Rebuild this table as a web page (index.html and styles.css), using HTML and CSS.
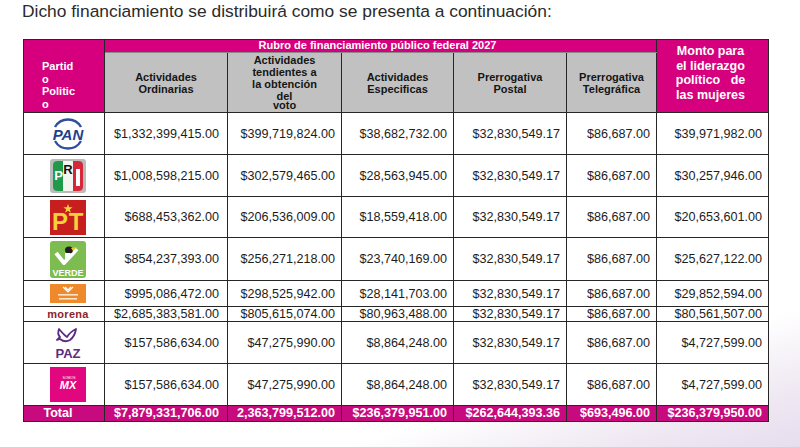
FILE: index.html
```html
<!DOCTYPE html>
<html lang="es">
<head>
<meta charset="utf-8">
<title>Financiamiento</title>
<link rel="stylesheet" href="styles.css">
</head>
<body>
<p class="title">Dicho financiamiento se distribuirá como se presenta a continuación:</p>
<table class="fin">
  <colgroup>
    <col class="c-party"><col class="c1"><col class="c2"><col class="c3"><col class="c4"><col class="c5"><col class="c6">
  </colgroup>
  <thead>
    <tr class="h-top">
      <th class="mag party-h" rowspan="2">Partid<br>o<br>Politic<br>o</th>
      <th class="mag rubro" colspan="5"><div class="rubro-in">Rubro de financiamiento público federal 2027</div></th>
      <th class="mag monto" rowspan="2">Monto para<br>el liderazgo<br>político&nbsp;&nbsp; de<br>las mujeres</th>
    </tr>
    <tr class="h-sub">
      <th class="gray">Actividades<br>Ordinarias</th>
      <th class="gray">Actividades<br>tendientes a<br>la obtención<br><span class="tight">del<br>voto</span></th>
      <th class="gray">Actividades<br>Especificas</th>
      <th class="gray">Prerrogativa<br>Postal</th>
      <th class="gray">Prerrogativa<br>Telegráfica</th>
    </tr>
  </thead>
  <tbody>
    <tr class="r42">
      <td class="logo">
        <svg width="40" height="38" viewBox="0 0 40 38">
          <path d="M7 12 A15 15 0 0 1 33 12" fill="none" stroke="#2d4f9e" stroke-width="2.4"/>
          <path d="M7 26 A15 15 0 0 0 33 26" fill="none" stroke="#2d4f9e" stroke-width="2.4"/>
          <text x="20" y="24.5" text-anchor="middle" class="pan-t">PAN</text>
        </svg>
      </td>
      <td>$1,332,399,415.00</td><td>$399,719,824.00</td><td>$38,682,732.00</td><td>$32,830,549.17</td><td>$86,687.00</td><td>$39,971,982.00</td>
    </tr>
    <tr class="r42">
      <td class="logo">
        <svg width="36" height="34" viewBox="0 0 36 34">
          <rect x="0" y="0" width="36" height="34" rx="3" fill="#b9bcb8"/>
          <path d="M3 6 Q3 2 8 2 L13 2 L13 32 L8 32 Q3 32 3 28 Z" fill="#1f9a4a"/>
          <rect x="13" y="2" width="10" height="30" fill="#f4f4f0"/>
          <path d="M23 2 L28 2 Q33 2 33 6 L33 28 Q33 32 28 32 L23 32 Z" fill="#d7263a"/>
          <text x="8.5" y="21" class="pri-t" fill="#fff">P</text>
          <text x="18" y="15" class="pri-t" fill="#111">R</text>
          <rect x="26" y="10" width="4" height="17" fill="#fff"/>
        </svg>
      </td>
      <td>$1,008,598,215.00</td><td>$302,579,465.00</td><td>$28,563,945.00</td><td>$32,830,549.17</td><td>$86,687.00</td><td>$30,257,946.00</td>
    </tr>
    <tr class="r41">
      <td class="logo">
        <svg width="36" height="35" viewBox="0 0 36 35">
          <rect x="0" y="0" width="36" height="35" fill="#c71e1e"/>
          <text x="10" y="30" class="pt-t">P</text>
          <text x="26" y="30" class="pt-t">T</text>
          <polygon points="18,4 19.2,7.3 22.6,7.3 19.8,9.4 20.9,12.7 18,10.7 15.1,12.7 16.2,9.4 13.4,7.3 16.8,7.3" fill="#f4d23a"/>
        </svg>
      </td>
      <td>$688,453,362.00</td><td>$206,536,009.00</td><td>$18,559,418.00</td><td>$32,830,549.17</td><td>$86,687.00</td><td>$20,653,601.00</td>
    </tr>
    <tr class="r43">
      <td class="logo">
        <svg width="36" height="37" viewBox="0 0 36 37">
          <rect x="0" y="0" width="36" height="37" rx="3" fill="#7dbd4f"/>
          <path d="M6 12 L14 22 L27 8" fill="none" stroke="#fff" stroke-width="4" stroke-linejoin="round"/>
          <ellipse cx="19" cy="9" rx="4" ry="3.5" fill="#1e1e1e"/>
          <path d="M21 7 L27 6 L23 10 Z" fill="#f1c21b"/>
          <rect x="15" y="12" width="5" height="6" fill="#fff"/>
          <text x="18" y="35" text-anchor="middle" class="verde-t">VERDE</text>
        </svg>
      </td>
      <td>$854,237,393.00</td><td>$256,271,218.00</td><td>$23,740,169.00</td><td>$32,830,549.17</td><td>$86,687.00</td><td>$25,627,122.00</td>
    </tr>
    <tr class="r26">
      <td class="logo">
        <svg width="36" height="19" viewBox="0 0 36 19">
          <rect x="0" y="0" width="36" height="19" fill="#ef8a2c"/>
          <path d="M13 3 L18 8 L23 3 M15 3 L18 6 L21 3" fill="none" stroke="#fff" stroke-width="1.2"/>
          <rect x="8" y="10" width="20" height="1.6" fill="#fde3c8"/>
          <rect x="9" y="14" width="18" height="1.6" fill="#fde3c8"/>
        </svg>
      </td>
      <td>$995,086,472.00</td><td>$298,525,942.00</td><td>$28,141,703.00</td><td>$32,830,549.17</td><td>$86,687.00</td><td>$29,852,594.00</td>
    </tr>
    <tr class="r15">
      <td class="logo"><span class="morena">morena</span></td>
      <td><span class="up">$2,685,383,581.00</span></td><td><span class="up">$805,615,074.00</span></td><td><span class="up">$80,963,488.00</span></td><td><span class="up">$32,830,549.17</span></td><td><span class="up">$86,687.00</span></td><td><span class="up">$80,561,507.00</span></td>
    </tr>
    <tr class="r42">
      <td class="logo">
        <svg width="40" height="34" viewBox="0 0 40 34">
          <path d="M11 3 Q16 9 19 11 Q22 6 28 3 Q27 10 22 14 Q17 17 12 13 L9 14 L12 11 Q9 8 11 3 Z" fill="none" stroke="#5a2d82" stroke-width="1.8" stroke-linejoin="round"/>
          <text x="20" y="32" text-anchor="middle" class="paz-t">PAZ</text>
        </svg>
      </td>
      <td>$157,586,634.00</td><td>$47,275,990.00</td><td>$8,864,248.00</td><td>$32,830,549.17</td><td>$86,687.00</td><td>$4,727,599.00</td>
    </tr>
    <tr class="r42">
      <td class="logo">
        <svg width="36" height="35" viewBox="0 0 36 35">
          <rect x="0" y="0" width="36" height="35" fill="#e2067f"/>
          <text x="19" y="12" text-anchor="middle" class="somos-t">SOMOS</text>
          <text x="18" y="22" text-anchor="middle" class="mx-t">MX</text>
        </svg>
      </td>
      <td>$157,586,634.00</td><td>$47,275,990.00</td><td>$8,864,248.00</td><td>$32,830,549.17</td><td>$86,687.00</td><td>$4,727,599.00</td>
    </tr>
    <tr class="total">
      <td class="tot-label">Total</td>
      <td>$7,879,331,706.00</td><td>2,363,799,512.00</td><td>$236,379,951.00</td><td>$262,644,393.36</td><td>$693,496.00</td><td>$236,379,950.00</td>
    </tr>
  </tbody>
</table>
</body>
</html>
```
FILE: styles.css
```css
html, body {
  margin: 0;
  height: 100%;
}
body {
  font-family: "Liberation Sans", Arial, sans-serif;
  background: linear-gradient(163deg, #ffffff 0%, #ffffff 80%, #f1ebf4 90%, #e7ddee 100%);
  color: #1c1c1c;
  overflow: hidden;
}
.title {
  margin: 0;
  padding: 1px 0 0 22px;
  height: 39px;
  box-sizing: border-box;
  font-size: 17.4px;
  line-height: 20px;
  color: #2b2b2b;
}
.fin {
  margin-left: 23px;
  border-collapse: collapse;
  table-layout: fixed;
  width: 745px;
  background: #fff;
}
.c-party { width: 81px; }
.c1 { width: 123px; }
.c2 { width: 114px; }
.c3 { width: 112px; }
.c4 { width: 113px; }
.c5 { width: 90px; }
.c6 { width: 112px; }

.fin th, .fin td {
  border: 1.5px solid #262626;
  padding: 0;
}
.fin .mag {
  background: #d6007f;
  color: #fff;
}
.h-top { height: 13px; }
.h-sub { height: 60px; }
.fin .rubro {
  font-size: 11px;
  font-weight: bold;
  text-align: center;
  border-bottom-color: #8a8a8a;
}
.rubro-in {
  height: 12px;
  line-height: 11px;
  overflow: hidden;
  padding-right: 6px;
}
.fin .party-h {
  font-size: 11px;
  line-height: 12.5px;
  text-align: left;
  vertical-align: top;
  padding-left: 18px;
  padding-top: 20px;
}
.fin .monto {
  font-size: 12.5px;
  line-height: 14.5px;
  text-align: center;
  vertical-align: top;
  padding-top: 4px;
  padding-right: 4px;
}
.fin .gray {
  background: #c1c1c1;
  font-size: 11px;
  line-height: 12px;
  color: #151515;
  font-weight: bold;
  vertical-align: middle;
}
.tight {
  display: inline-block;
  line-height: 9px;
  padding-top: 2px;
}
.fin td {
  text-align: right;
  font-size: 12.6px;
  padding-right: 6px;
  vertical-align: middle;
  white-space: nowrap;
}
.fin tbody td:nth-child(2) { padding-right: 8px; }
.fin td.logo {
  text-align: center;
  padding: 0 0 0 8px;
  line-height: 0;
}
.logo svg { display: inline-block; }
.r42 { height: 42px; }
.r41 { height: 41px; }
.r43 { height: 43px; }
.r26 { height: 26px; }
.r15 { height: 15px; }
.r15 td { line-height: 12px; }
.up {
  display: inline-block;
  margin-top: -5px;
}
.pan-t {
  font-family: "Liberation Sans", Arial, sans-serif;
  font-weight: bold;
  font-style: italic;
  font-size: 15px;
  fill: #233f8c;
}
.pri-t {
  font-family: "Liberation Sans", Arial, sans-serif;
  font-weight: bold;
  font-size: 13px;
  text-anchor: middle;
}
.pt-t {
  font-family: "Liberation Sans", Arial, sans-serif;
  font-weight: bold;
  font-size: 24px;
  fill: #f4d23a;
  text-anchor: middle;
}
.verde-t {
  font-family: "Liberation Sans", Arial, sans-serif;
  font-weight: bold;
  font-size: 9px;
  fill: #fff;
}
.morena {
  font-family: "Liberation Sans", Arial, sans-serif;
  font-weight: bold;
  font-size: 11px;
  line-height: 12px;
  color: #8c1f2c;
  letter-spacing: 0.3px;
}
.paz-t {
  font-family: "Liberation Sans", Arial, sans-serif;
  font-weight: 900;
  font-size: 13px;
  fill: #5a2d82;
}
.somos-t {
  font-family: "Liberation Sans", Arial, sans-serif;
  font-size: 3.5px;
  fill: #fff;
}
.mx-t {
  font-family: "Liberation Sans", Arial, sans-serif;
  font-weight: bold;
  font-style: italic;
  font-size: 11px;
  fill: #fff;
}
.total { height: 16px; }
.total td {
  background: #c70a7d;
  color: #fff;
  font-weight: bold;
  line-height: 13px;
}
.fin td.tot-label {
  text-align: center;
  padding-right: 12px;
}
```
